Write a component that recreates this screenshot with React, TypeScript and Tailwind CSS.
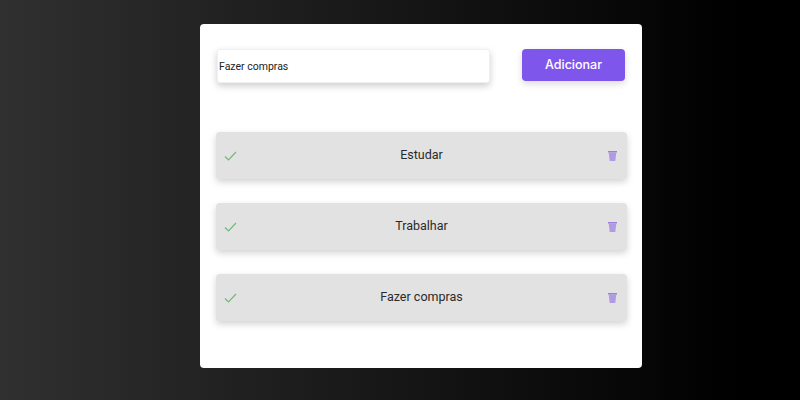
export default function App() {
  const items = ["Estudar", "Trabalhar", "Fazer compras"];
  return (
    <div className="w-full h-[400px] flex items-start justify-start pt-[24px] pl-[200px] bg-[linear-gradient(to_right,#303030,#000000_92%)] font-['Roboto',sans-serif]">
      <div className="w-[442px] h-[344px] bg-white rounded-[4px] pt-[25px] pl-[16px] pr-[15px] flex flex-col">
        <div className="flex items-start justify-between h-[34px]">
          <input
            readOnly
            value="Fazer compras"
            className="ml-px w-[273px] h-[34px] bg-white rounded-[3px] pl-[1px] pr-[2px] text-[10.5px] text-[#222] outline-none border border-[#f0f0f0] shadow-[0_3px_7px_rgba(0,0,0,0.2)]"
          />
          <button className="mr-[2px] w-[103px] h-[32px] bg-[#7f56ec] rounded-[4px] text-white text-[12.5px] font-medium font-['Inter',sans-serif] shadow-[0_3px_7px_rgba(0,0,0,0.14)]">
            Adicionar
          </button>
        </div>
        <ul className="mt-[49px] flex flex-col gap-[24px]">
          {items.map((t) => (
            <li
              key={t}
              className="relative h-[47px] bg-[#e2e2e2] rounded-[4px] flex items-center justify-between pl-[8px] pr-[10px] shadow-[0_3px_7px_rgba(0,0,0,0.18)]"
            >
              <svg width="13" height="12" viewBox="0 0 13 12" fill="none">
                <path d="M1 6.5 L4.5 10 L12 2" stroke="#6dbb75" strokeWidth="1.2" />
              </svg>
              <span className="text-[12.5px] text-[#2a2a2a] -mt-px -ml-[2px]">{t}</span>
              <svg width="9" height="10" viewBox="0 0 9 10">
                <path d="M0 0 H9 V1.5 H0 Z" fill="#9a80d8" />
                <path d="M0.7 1.5 H8.3 L7.3 10 H1.7 Z" fill="#b09ae4" />
              </svg>
            </li>
          ))}
        </ul>
      </div>
    </div>
  );
}
